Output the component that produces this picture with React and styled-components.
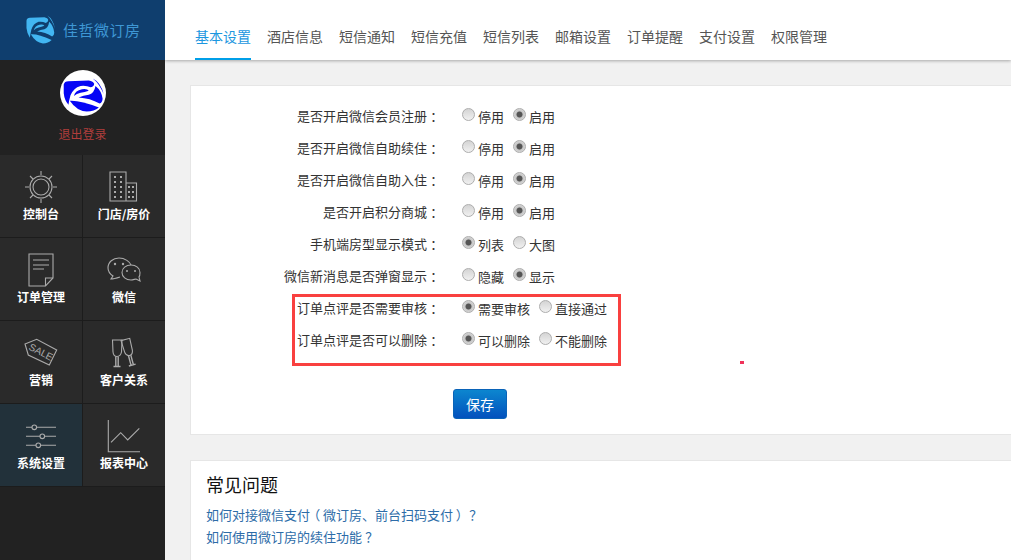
import React from 'react';
import styled, { createGlobalStyle } from 'styled-components';

const GlobalStyle = createGlobalStyle`
  html, body {
    margin: 0;
    padding: 0;
    background: #f1f1f1;
    font-family: "Noto Sans CJK SC", "Liberation Sans", sans-serif;
    overflow: hidden;
  }
`;

const Page = styled.div`
  display: flex;
  width: 1011px;
  height: 560px;
  overflow: hidden;
`;

const Sidebar = styled.aside`
  flex: 0 0 165px;
  background: #222;
  display: flex;
  flex-direction: column;
  position: relative;
  z-index: 2;
`;

const Brand = styled.div`
  height: 60px;
  box-sizing: border-box;
  padding: 0 0 2px 26px;
  background: #0f3e6e;
  display: flex;
  align-items: center;
  gap: 8px;
`;

const BrandName = styled.span`
  color: #3e97d4;
  font-size: 15px;
  letter-spacing: 0.5px;
`;

const Account = styled.div`
  height: 95px;
  display: flex;
  flex-direction: column;
  align-items: center;
  padding-top: 10px;
  box-sizing: border-box;
`;

const Avatar = styled.div`
  width: 46px;
  height: 46px;
  border-radius: 50%;
  overflow: hidden;
  background: #fff;
`;

const Logout = styled.a`
  margin-top: 9px;
  color: #b03e3c;
  font-size: 12px;
  line-height: 18px;
`;

const MenuGrid = styled.nav`
  display: grid;
  grid-template-columns: 82px 82px;
  grid-auto-rows: 82px;
  gap: 1px;
  background: #1c1c1c;
  padding-bottom: 1px;
`;

const MenuCell = styled.a`
  background: ${(p) => (p.$active ? '#22313a' : '#2a2a2a')};
  display: flex;
  flex-direction: column;
  align-items: center;
  padding-top: 14px;
  box-sizing: border-box;
`;

const MenuIcon = styled.svg`
  width: 50px;
  height: 36px;
  fill: none;
  stroke: #ababab;
  stroke-width: 1.1;
`;

const MenuLabel = styled.span`
  margin-top: 1px;
  color: #fff;
  font-size: 12px;
  font-weight: 700;
  line-height: 16px;
  white-space: nowrap;
`;

const Main = styled.main`
  flex: 1;
  min-width: 0;
  overflow: hidden;
`;

const TopBar = styled.div`
  height: 60px;
  box-sizing: border-box;
  background: #fff;
  box-shadow: 0 1px 3px rgba(0, 0, 0, 0.3);
  display: flex;
  gap: 16px;
  padding-left: 30px;
`;

const Tab = styled.a`
  height: 60px;
  box-sizing: border-box;
  padding-top: 26px;
  font-size: 14px;
  line-height: 20px;
  color: ${(p) => (p.$active ? '#1c97e0' : '#555')};
  border-bottom: 2px solid ${(p) => (p.$active ? '#009fe8' : 'transparent')};
  white-space: nowrap;
`;

const Content = styled.div`
  padding: 25px 0 0 25px;
  width: 1000px;
`;

const Card = styled.section`
  background: #fff;
  border: 1px solid #e6e6e6;
  box-sizing: border-box;
  margin-bottom: 25px;
`;

const Form = styled.div`
  height: 348px;
  box-sizing: border-box;
  padding-top: 14px;
`;

const Row = styled.div`
  display: grid;
  grid-template-columns: 249px 1fr;
  column-gap: 22px;
  align-items: center;
  height: 32px;
`;

const RowLabel = styled.div`
  padding-bottom: 2px;
  text-align: right;
  font-size: 13px;
  color: #333;
  white-space: nowrap;
`;

// full-width punctuation centred in its em box, as the reference font draws it
const Punct = styled.span`
  display: inline-block;
  width: 1em;
  text-align: center;
  font-feature-settings: "palt";
`;

const Options = styled.div`
  display: flex;
  gap: 9px;
`;

const Option = styled.label`
  display: flex;
  align-items: center;
  gap: 3px;
  padding-top: 2px;
  font-size: 13px;
  line-height: 18px;
  color: #333;
`;

const Radio = styled.input.attrs({ type: 'radio', readOnly: true })`
  appearance: none;
  width: 13px;
  height: 13px;
  margin: -5px 0 0;
  border-radius: 50%;
  border: 1px solid #adadad;
  box-sizing: border-box;
  background: linear-gradient(#d4d4d4, #f0f0f0);
  &:checked {
    background: radial-gradient(circle, #555 0, #555 2.6px, #c4c4c4 3.4px, #e8e8e8 100%);
  }
`;

const Highlighted = styled.div`
  position: relative;
`;

const HighlightFrame = styled.div`
  position: absolute;
  left: 101px;
  top: 2px;
  width: 329px;
  height: 72px;
  box-sizing: border-box;
  border: 3px solid #f9403f;
  pointer-events: none;
`;

const StrayMark = styled.i`
  position: absolute;
  left: 740px;
  top: 361px;
  width: 4px;
  height: 3px;
  background: #f0325a;
`;

const SaveButton = styled.button`
  display: block;
  width: 54px;
  height: 30px;
  margin: 33px 0 0 262px;
  padding: 0;
  border: 1px solid #0a63b8;
  border-radius: 3px;
  background: linear-gradient(#0c86cf, #0351bd);
  color: #fff;
  font: 14px "Noto Sans CJK SC", sans-serif;
`;

const Faq = styled.div`
  height: 120px;
  padding: 10px 15px;
  box-sizing: border-box;
`;

const FaqTitle = styled.h3`
  margin: 0 0 7px;
  font-size: 18px;
  font-weight: 400;
  line-height: 26px;
  color: #111;
`;

const FaqLink = styled.a`
  display: block;
  font-size: 13px;
  line-height: 22px;
  color: #2d6ca8;
`;

const Swirl = ({ fill, size, viewBox }) => (
  <svg width={size} height={size} viewBox={viewBox} fill={fill} preserveAspectRatio="none">
    <path d="M18 50Q20 40 32 40L92 38Q106 40 108 48Q108 56 98 58Q84 52 68 54Q46 60 38 82Q34 96 32 110Q20 96 18 76Z" />
    <path d="M48 84Q52 68 72 64Q88 62 92 68Q80 72 68 74Q56 76 48 84Z" />
    <path d="M112 54Q130 68 133 92Q132 104 124 106Q96 90 62 88Q76 82 92 80Q108 76 112 54Z" />
    <path d="M36 98Q66 96 122 118Q108 130 86 130Q56 128 36 98Z" />
    <path d="M104 32Q128 44 136 78Q124 48 104 32Z" />
  </svg>
);

const SunIcon = () => (
  <MenuIcon viewBox="0 0 50 36">
    <circle cx="25" cy="18" r="11" />
    <circle cx="25" cy="18" r="8" />
    <path d="M25 2V6M25 30V34M9 18H13M37 18H41M14 7L17 10M36 7L33 10M14 29L17 26M36 29L33 26" />
  </MenuIcon>
);

const towerDots = [8, 13, 18, 23, 28];

const BuildingIcon = () => (
  <MenuIcon viewBox="0 0 50 36">
    <path d="M11 3H27V32H11ZM27 14H37.5V32H27Z" />
    <g fill="#ababab" stroke="none">
      {towerDots.map((y) => (
        <React.Fragment key={y}>
          <rect x="15" y={y - 1} width="2" height="2" />
          <rect x="21" y={y - 1} width="2" height="2" />
          {y > 13 && <rect x="29" y={y - 1} width="2" height="2" />}
          {y > 13 && <rect x="33" y={y - 1} width="2" height="2" />}
        </React.Fragment>
      ))}
    </g>
  </MenuIcon>
);

const DocIcon = () => (
  <MenuIcon viewBox="0 0 50 36">
    <path d="M13 2H37V26L29.5 34H13Z" />
    <path d="M37 26H29.5V34" />
    <path d="M17 8H33M17 13H33M17 17H28" />
  </MenuIcon>
);

const WechatIcon = () => (
  <MenuIcon viewBox="0 0 50 36">
    <path d="M21 25C15 27 13 27 12 27L14 24C11 22 9 19 9 16C9 10 14 6 20 6C26 6 31 10 32 13" />
    <path d="M32 13C27 13 23 16 23 20.500C23 25 27 28 32 28C34 28 36 27 37 27L41 29L40 25C41 24 41 22 41 20.500C41 16 37 13 32 13Z" />
    <g fill="#ababab" stroke="none">
      <circle cx="16" cy="12" r="1.200" />
      <circle cx="24" cy="12" r="1.200" />
      <circle cx="28" cy="19" r="1" />
      <circle cx="36" cy="19" r="1" />
    </g>
  </MenuIcon>
);

const TagIcon = () => (
  <MenuIcon viewBox="0 0 50 36">
    <path d="M9 9L20.700 4.300L40.700 15L33.300 30L12.300 20Z" />
    <text
      x="25"
      y="20.500"
      fontSize="10"
      fontFamily="Liberation Sans, sans-serif"
      textAnchor="middle"
      transform="rotate(27 25 17)"
      fill="#ababab"
      stroke="none"
    >
      SALE
    </text>
  </MenuIcon>
);

const GlassIcon = () => (
  <MenuIcon viewBox="0 0 50 36">
    <path d="M13.500 5H23L22.500 17Q21.500 21.500 18 21.500Q14.500 21.500 14 17Z" />
    <path d="M16.800 21.500V31M19.200 21.500V31M14.500 31.500H21.500" strokeWidth="1.400" />
    <g transform="rotate(-15 30 18)">
      <path d="M25.500 4H34.500L34 16Q33.500 20.500 30 20.500Q26.500 20.500 26 16Z" />
      <path d="M28.800 20.500V30M31.200 20.500V30M26.500 30.500H33.500" strokeWidth="1.400" />
    </g>
  </MenuIcon>
);

const SlidersIcon = () => (
  <MenuIcon viewBox="0 0 50 36">
    <path d="M10 9.300H16M21 9.300H40M10 18.300H24M29 18.300H40M10 27.300H20M25 27.300H40" />
    <circle cx="18.300" cy="9.300" r="2.300" />
    <circle cx="26.300" cy="18.300" r="2.300" />
    <circle cx="22.300" cy="27.300" r="2.300" />
  </MenuIcon>
);

const ChartIcon = () => (
  <MenuIcon viewBox="0 0 50 36">
    <path d="M9.300 2V33.700H41" />
    <path d="M12 24.300L21.700 14.700L28.700 22L40.300 10.300" />
  </MenuIcon>
);

const menu = [
  { label: '控制台', Icon: SunIcon },
  { label: '门店/房价', Icon: BuildingIcon },
  { label: '订单管理', Icon: DocIcon },
  { label: '微信', Icon: WechatIcon },
  { label: '营销', Icon: TagIcon },
  { label: '客户关系', Icon: GlassIcon },
  { label: '系统设置', Icon: SlidersIcon, active: true },
  { label: '报表中心', Icon: ChartIcon },
];

const tabs = ['基本设置', '酒店信息', '短信通知', '短信充值', '短信列表', '邮箱设置', '订单提醒', '支付设置', '权限管理'];

const settings = [
  { label: '是否开启微信会员注册', options: ['停用', '启用'], checked: 1 },
  { label: '是否开启微信自助续住', options: ['停用', '启用'], checked: 1 },
  { label: '是否开启微信自助入住', options: ['停用', '启用'], checked: 1 },
  { label: '是否开启积分商城', options: ['停用', '启用'], checked: 1 },
  { label: '手机端房型显示模式', options: ['列表', '大图'], checked: 0 },
  { label: '微信新消息是否弹窗显示', options: ['隐藏', '显示'], checked: 1 },
];

const reviewSettings = [
  { label: '订单点评是否需要审核', options: ['需要审核', '直接通过'], checked: 0 },
  { label: '订单点评是否可以删除', options: ['可以删除', '不能删除'], checked: 0 },
];

const SettingRow = ({ label, options, checked }) => (
  <Row>
    <RowLabel>{label}<Punct>：</Punct></RowLabel>
    <Options>
      {options.map((name, i) => (
        <Option key={name}>
          <Radio name={label} checked={i === checked} />
          {name}
        </Option>
      ))}
    </Options>
  </Row>
);

export default function App() {
  return (
    <Page>
      <GlobalStyle />
      <Sidebar>
        <Brand>
          <Swirl fill="#42b6f2" size={29} viewBox="16 30 120 102" />
          <BrandName>佳哲微订房</BrandName>
        </Brand>
        <Account>
          <Avatar>
            <Swirl fill="#0505f5" size={46} viewBox="7 7 136 136" />
          </Avatar>
          <Logout>退出登录</Logout>
        </Account>
        <MenuGrid>
          {menu.map(({ label, Icon, active }) => (
            <MenuCell key={label} $active={active}>
              <Icon />
              <MenuLabel>{label}</MenuLabel>
            </MenuCell>
          ))}
        </MenuGrid>
      </Sidebar>
      <Main>
        <TopBar>
          {tabs.map((tab, i) => (
            <Tab key={tab} $active={i === 0}>{tab}</Tab>
          ))}
        </TopBar>
        <Content>
          <Card>
            <Form>
              {settings.map((s) => (
                <SettingRow key={s.label} {...s} />
              ))}
              <Highlighted>
                <HighlightFrame />
                {reviewSettings.map((s) => (
                  <SettingRow key={s.label} {...s} />
                ))}
              </Highlighted>
              <SaveButton>保存</SaveButton>
            </Form>
          </Card>
          <Card>
            <Faq>
              <FaqTitle>常见问题</FaqTitle>
              <FaqLink>如何对接微信支付<Punct>（</Punct>微订房、前台扫码支付<Punct>）</Punct><Punct>？</Punct></FaqLink>
              <FaqLink>如何使用微订房的续住功能<Punct>？</Punct></FaqLink>
            </Faq>
          </Card>
        </Content>
      </Main>
      <StrayMark />
    </Page>
  );
}
